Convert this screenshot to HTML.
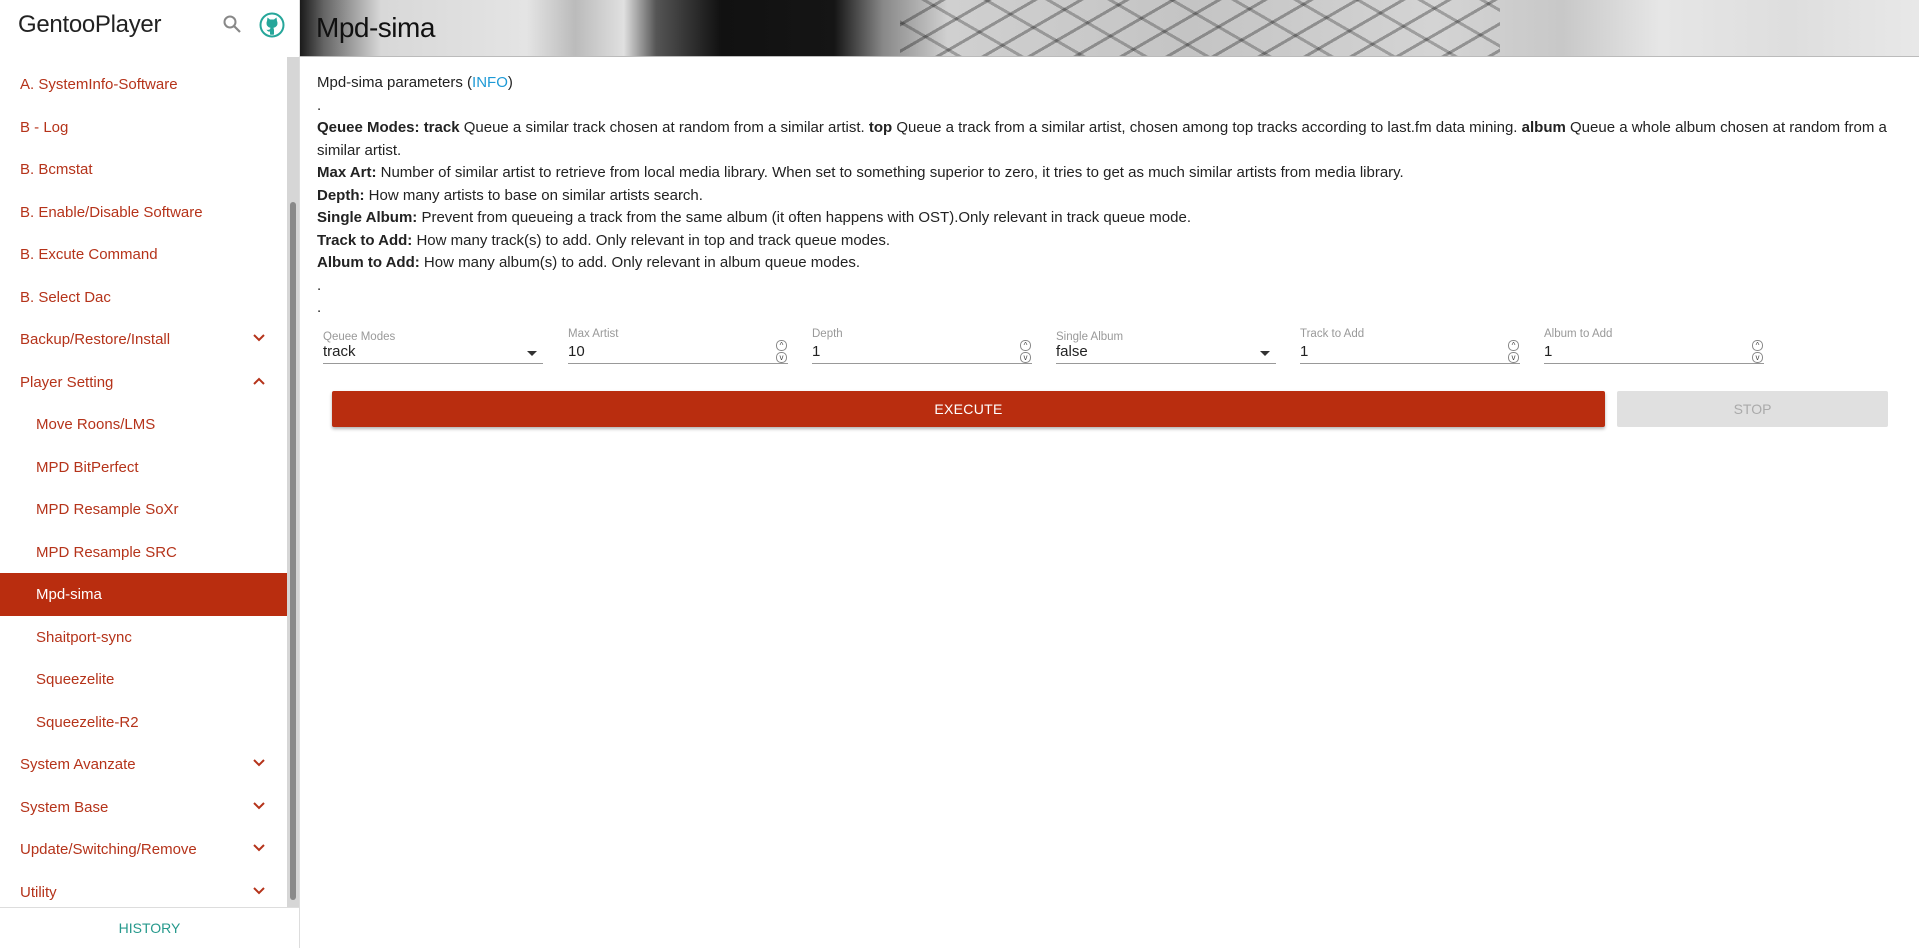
<!DOCTYPE html>
<html><head><meta charset="utf-8">
<style>
*{box-sizing:border-box;margin:0;padding:0}
body{width:1919px;height:948px;overflow:hidden;background:#fff;font-family:"Liberation Sans",sans-serif;position:relative}
#side{position:absolute;left:0;top:0;width:300px;height:948px;border-right:1px solid #ddd;background:#fff}
#side .title{position:absolute;left:18px;top:11px;font-size:24px;color:#222;letter-spacing:-0.3px}
#side .sc{position:absolute;left:0;top:57px;width:299px;height:850px;overflow:hidden}
.track{position:absolute;left:287px;top:0;width:12px;height:850px;background:#d6d6d6}
.thumb{position:absolute;left:290px;top:145px;width:6px;height:698px;background:#8a8a8a;border-radius:3px}
.it{position:absolute;left:0;width:287px;height:43px;line-height:43px;font-size:15px;color:#b5331a}
.it.sub{padding-left:36px}
.it.top{padding-left:20px}
.it.sel{background:#b92d0f;color:#fff}
.chev{position:absolute;left:252px;top:15px;width:14px;height:10px}
#hist{position:absolute;left:0;top:907px;width:299px;height:41px;border-top:1px solid #ddd;text-align:center;line-height:41px;color:#26998c;font-size:14px}
#hdr{position:absolute;left:300px;top:0;width:1619px;height:57px;overflow:hidden;
background:linear-gradient(90deg,#1a1a1a 0,#666 1.5%,#d8d8d8 5%,#e4e4e4 14%,#bbb 17%,#e0e0e0 20%,#555 22%,#111 26%,#151515 33%,#888 36%,#d0d0d0 40%,#c4c4c4 55%,#d4d4d4 70%,#c8c8c8 78%,#e6e6e6 84%,#dedede 92%,#e8e8e8 100%);border-bottom:1px solid #bbb}
#hdr .lines{position:absolute;top:0;bottom:0;left:600px;width:600px;background:repeating-linear-gradient(150deg,transparent 0 20px,rgba(0,0,0,.3) 20px 23px)}
#hdr .lines2{position:absolute;top:0;bottom:0;left:600px;width:600px;background:repeating-linear-gradient(30deg,transparent 0 28px,rgba(0,0,0,.25) 28px 31px)}
#hdr h1{position:absolute;left:16px;top:12px;font-weight:normal;font-size:28px;color:#111;letter-spacing:-0.5px}
#main{position:absolute;left:317px;top:72px;width:1575px;font-size:15px;color:#222;line-height:22.5px}
#main b{font-weight:bold}
.fld{position:absolute;top:328px;width:220px;height:36px;border-bottom:1px solid #999}
.fld .l{position:absolute;left:0;top:0;font-size:11.5px;color:#999}
.fld .v{position:absolute;left:0;top:15px;font-size:15px;color:#222}
.fld .arr{position:absolute;right:6px;top:23px;border-left:5px solid transparent;border-right:5px solid transparent;border-top:5px solid #333}
.fld .sp{position:absolute;right:0;top:12px;width:12px;height:24px}
.sp i{display:block;width:11px;height:11px;border:1px solid #888;border-radius:5px;margin-bottom:1px;font-style:normal;font-size:8px;line-height:9px;text-align:center;color:#444}
#exe{position:absolute;left:332px;top:391px;width:1273px;height:36px;background:#b92d0f;border-radius:2px;box-shadow:0 2px 3px rgba(0,0,0,.3);color:#fff;text-align:center;line-height:36px;font-size:14px;letter-spacing:.3px}
#stop{position:absolute;left:1617px;top:391px;width:271px;height:36px;background:#e0e0e0;border-radius:2px;color:#aaa;text-align:center;line-height:36px;font-size:14px}
</style></head><body>
<div id="side">
<div class="title">GentooPlayer</div>
<svg style="position:absolute;left:222px;top:14px" width="20" height="20" viewBox="0 0 20 20"><circle cx="8" cy="8" r="5.5" fill="none" stroke="#888" stroke-width="2"/><line x1="12" y1="12" x2="18" y2="18" stroke="#888" stroke-width="2.2"/></svg>
<svg style="position:absolute;left:259px;top:12px" width="26" height="26" viewBox="0 0 26 26"><circle cx="13" cy="13" r="11.5" fill="none" stroke="#26a69a" stroke-width="2"/><circle cx="13" cy="13" r="9.5" fill="#fff"/><path d="M8 9 L8.5 5.5 L11 7.5 L15 7.5 L17.5 5.5 L18 9 Q19 11 18 13.5 Q16.5 15.5 14.5 15.8 L15 18 L15 22.5 Q13 23 11 22.5 L11 19.5 Q8.5 20 7.5 17.5 Q9 18.5 11 17.2 L11.5 15.8 Q9.5 15.5 8 13.5 Q7 11 8 9Z" fill="#26a69a"/></svg>
<div class="sc">
<div class="it top" style="top:6px">A. SystemInfo-Software</div>
<div class="it top" style="top:49px">B - Log</div>
<div class="it top" style="top:91px">B. Bcmstat</div>
<div class="it top" style="top:134px">B. Enable/Disable Software</div>
<div class="it top" style="top:176px">B. Excute Command</div>
<div class="it top" style="top:219px">B. Select Dac</div>
<div class="it top" style="top:261px">Backup/Restore/Install<svg class="chev" viewBox="0 0 14 10"><path d="M2 2 L7 7 L12 2" fill="none" stroke="#b5331a" stroke-width="2"/></svg></div>
<div class="it top" style="top:304px">Player Setting<svg class="chev" viewBox="0 0 14 10"><path d="M2 8 L7 3 L12 8" fill="none" stroke="#b5331a" stroke-width="2"/></svg></div>
<div class="it sub" style="top:346px">Move Roons/LMS</div>
<div class="it sub" style="top:389px">MPD BitPerfect</div>
<div class="it sub" style="top:431px">MPD Resample SoXr</div>
<div class="it sub" style="top:474px">MPD Resample SRC</div>
<div class="it sub sel" style="top:516px">Mpd-sima</div>
<div class="it sub" style="top:559px">Shaitport-sync</div>
<div class="it sub" style="top:601px">Squeezelite</div>
<div class="it sub" style="top:644px">Squeezelite-R2</div>
<div class="it top" style="top:686px">System Avanzate<svg class="chev" viewBox="0 0 14 10"><path d="M2 2 L7 7 L12 2" fill="none" stroke="#b5331a" stroke-width="2"/></svg></div>
<div class="it top" style="top:729px">System Base<svg class="chev" viewBox="0 0 14 10"><path d="M2 2 L7 7 L12 2" fill="none" stroke="#b5331a" stroke-width="2"/></svg></div>
<div class="it top" style="top:771px">Update/Switching/Remove<svg class="chev" viewBox="0 0 14 10"><path d="M2 2 L7 7 L12 2" fill="none" stroke="#b5331a" stroke-width="2"/></svg></div>
<div class="it top" style="top:814px">Utility<svg class="chev" viewBox="0 0 14 10"><path d="M2 2 L7 7 L12 2" fill="none" stroke="#b5331a" stroke-width="2"/></svg></div>
<div class="track"></div><div class="thumb"></div>
</div>
<div id="hist">HISTORY</div>
</div>
<div id="hdr"><div class="lines"></div><div class="lines2"></div><h1>Mpd-sima</h1></div>
<div id="main">
<div>Mpd-sima parameters (<span style="color:#1e9ad6">INFO</span>)</div>
<div>.</div>
<div><b>Qeuee Modes: track</b> Queue a similar track chosen at random from a similar artist. <b>top</b> Queue a track from a similar artist, chosen among top tracks according to last.fm data mining. <b>album</b> Queue a whole album chosen at random from a<br>similar artist.</div>
<div><b>Max Art:</b> Number of similar artist to retrieve from local media library. When set to something superior to zero, it tries to get as much similar artists from media library.</div>
<div><b>Depth:</b> How many artists to base on similar artists search.</div>
<div><b>Single Album:</b> Prevent from queueing a track from the same album (it often happens with OST).Only relevant in track queue mode.</div>
<div><b>Track to Add:</b> How many track(s) to add. Only relevant in top and track queue modes.</div>
<div><b>Album to Add:</b> How many album(s) to add. Only relevant in album queue modes.</div>
<div>.</div>
<div>.</div>
</div>
<div class="fld" style="left:323px"><div class="l" style="top:3px">Qeuee Modes</div><div class="v">track</div><div class="arr"></div></div>
<div class="fld" style="left:568px"><div class="l">Max Artist</div><div class="v">10</div><div class="sp"><i>^</i><i>v</i></div></div>
<div class="fld" style="left:812px"><div class="l">Depth</div><div class="v">1</div><div class="sp"><i>^</i><i>v</i></div></div>
<div class="fld" style="left:1056px"><div class="l" style="top:3px">Single Album</div><div class="v">false</div><div class="arr"></div></div>
<div class="fld" style="left:1300px"><div class="l">Track to Add</div><div class="v">1</div><div class="sp"><i>^</i><i>v</i></div></div>
<div class="fld" style="left:1544px"><div class="l">Album to Add</div><div class="v">1</div><div class="sp"><i>^</i><i>v</i></div></div>
<div id="exe">EXECUTE</div>
<div id="stop">STOP</div>
</body></html>
